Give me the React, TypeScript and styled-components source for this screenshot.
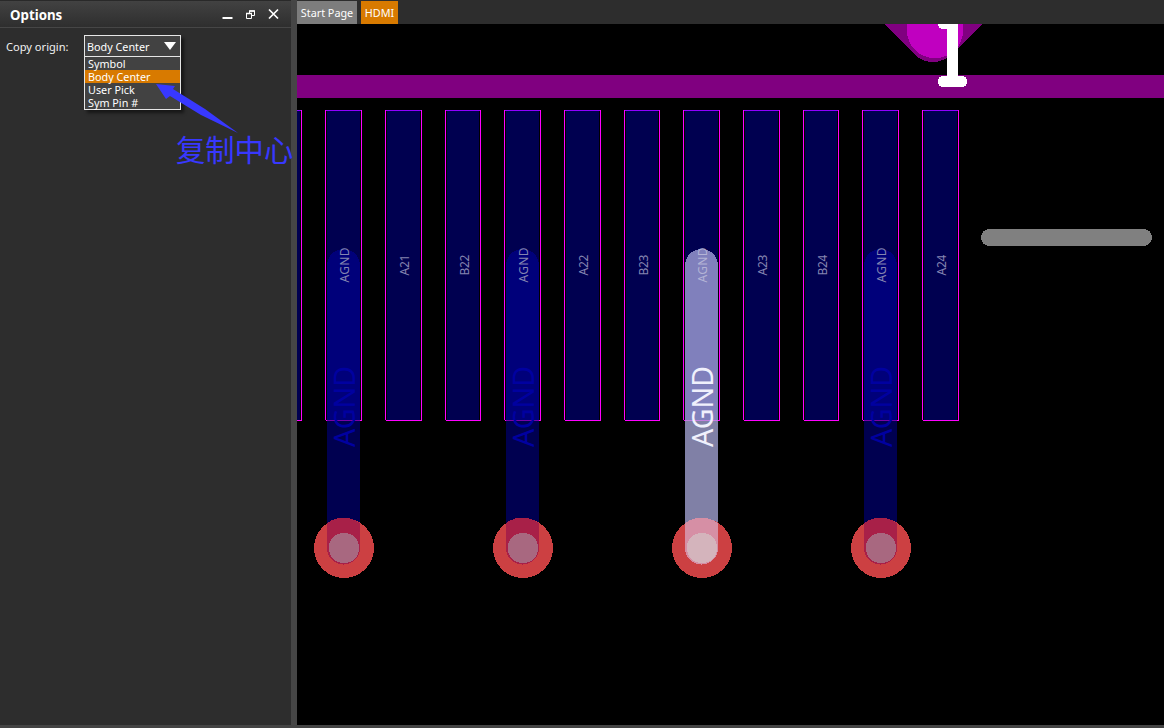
import React from 'react';
import styled, { createGlobalStyle } from 'styled-components';

const GlobalStyle = createGlobalStyle`
  * { box-sizing: border-box; }
  html, body { margin: 0; background: #2d2d2d; overflow: hidden; }
`;

const Window = styled.div`
  display: grid;
  grid-template-columns: 291px 6px 1fr;
  grid-template-rows: 725px 3px;
  width: 1164px;
  height: 728px;
  background: #2d2d2d;
  color: #fff;
  font-family: 'Noto Sans', 'Noto Sans CJK SC', sans-serif;
  font-size: 10.8px;
  line-height: 13px;
  white-space: nowrap;
`;

const Panel = styled.aside`
  display: flex;
  flex-direction: column;
  position: relative;
  z-index: 1;
  border-top: 1px solid #292929;
`;

const PanelHeader = styled.header`
  display: flex;
  align-items: center;
  justify-content: space-between;
  height: 27px;
  padding: 0 0 0 10px;
  border-bottom: 1px solid #464646;
  background: linear-gradient(#424242, #2e2e2e);
`;

const PanelTitle = styled.h1`
  margin: 0;
  padding-top: 1px;
  font-size: 13.3px;
  line-height: 18px;
  font-weight: 700;
`;

const Field = styled.div`
  display: flex;
  align-items: flex-start;
  padding: 7px 0 0 6px;
`;

const Label = styled.label`
  width: 78px;
  padding-top: 5px;
  color: #f2f2f2;
  font-size: 11.1px;
`;

const Select = styled.div`
  width: 97px;
  border: 1px solid #e6e6e6;
  background: #424242;
  box-shadow: 3px 3px 3px rgba(0, 0, 0, 0.5);
`;

const SelectValue = styled.div`
  display: flex;
  align-items: center;
  justify-content: space-between;
  height: 21px;
  padding: 0 4px 0 2px;
  border-bottom: 1px solid #e6e6e6;
`;

const Option = styled.div<{ $active?: boolean }>`
  height: 13px;
  padding-left: 3px;
  background: ${(p) => (p.$active ? '#d87a00' : 'transparent')};
`;

const Annotation = styled.div`
  position: absolute;
  left: 176px;
  top: 129px;
  z-index: 2;
  color: #3838ff;
  font: 29.3px/36px 'Noto Sans CJK SC', sans-serif;
`;

const Arrow = styled.svg`
  position: absolute;
  left: 150px;
  top: 79px;
  z-index: 2;
`;

const Splitter = styled.div`
  background: #464646;
`;

const Workspace = styled.main`
  display: flex;
  flex-direction: column;
  min-width: 0;
`;

const TabBar = styled.nav`
  display: flex;
  gap: 4px;
  height: 24px;
  padding-top: 1px;
`;

const Tab = styled.div<{ $active?: boolean }>`
  width: ${(p) => (p.$active ? 37 : 60)}px;
  text-align: center;
  line-height: 24px;
  font-size: 10.8px;
  background: ${(p) => (p.$active ? '#d87a00' : '#7d7d7d')};
`;

const Board = styled.svg`
  display: block;
  background: #000;
`;

const StatusEdge = styled.footer`
  grid-column: 1 / -1;
  background: #444;
`;

const options = ['Symbol', 'Body Center', 'User Pick', 'Sym Pin #'];

const pads = [
  { x: 325, name: 'AGND' },
  { x: 385, name: 'A21' },
  { x: 445, name: 'B22', width: 36 },
  { x: 504, name: 'AGND' },
  { x: 564, name: 'A22' },
  { x: 624, name: 'B23', width: 36 },
  { x: 683, name: 'AGND', selected: true },
  { x: 743, name: 'A23' },
  { x: 803, name: 'B24', width: 36 },
  { x: 862, name: 'AGND' },
  { x: 922, name: 'A24' },
];

function Pad({ x, width = 37 }: { x: number; width?: number }) {
  return (
    <g shapeRendering="crispEdges">
      <rect x={x + 2} y={111} width={width - 4} height={309} fill="#000050" />
      <rect x={x + 1} y={110} width={width - 2} height={1} fill="#9000ff" />
      <g fill="#ff00ff">
        <rect x={x} y={110} width={1} height={310} />
        <rect x={x + width - 1} y={110} width={1} height={310} />
        <rect x={x + 1} y={420} width={width - 1} height={1} />
      </g>
    </g>
  );
}

function Trace({ x, selected }: { x: number; selected?: boolean }) {
  const left = x + 2;
  const cx = x + 19;
  return (
    <g shapeRendering="crispEdges">
      <path
        d={`M${left} 420V265.5a16.5 16.5 0 0 1 33 0V420Z`}
        fill={selected ? '#8080bc' : '#00007a'}
      />
      <rect x={left} y={420} width={33} height={110} fill={selected ? '#8080a6' : '#000050'} />
      <rect x={left} y={420} width={33} height={1} fill={selected ? '#c080e0' : '#7800a8'} />
      <circle cx={cx} cy={548} r={30} fill="#cc4042" />
      <path
        d={`M${left} 523Q${cx - 0.5} 512 ${left + 33} 523V548a16.5 16.5 0 0 1 -33 0Z`}
        fill={selected ? '#d68fa5' : '#a82048'}
      />
      <circle cx={cx} cy={548} r={15.2} fill={selected ? '#d4b4bc' : '#a86880'} />
    </g>
  );
}

function BoardView() {
  return (
    <Board width={867} height={701} viewBox="297 24 867 701" fontFamily="'Noto Sans', sans-serif">
      <path d="M884 24H982L950 56Q933 68 916 56Z" fill="#800080" shapeRendering="crispEdges" />
      <circle cx={935} cy={30} r={28.2} fill="#c000c0" shapeRendering="crispEdges" />
      <rect x={297} y={75} width={867} height={23} fill="#800080" />
      <g fill="#fff" shapeRendering="crispEdges">
        <rect x={947} y={24} width={11} height={58} />
        <rect x={938} y={18} width={16} height={11} rx={5} />
        <rect x={938} y={76} width={29} height={11} rx={5} />
      </g>
      <Pad x={265} />
      {pads.map((p) => (
        <Pad key={p.x} x={p.x} width={p.width} />
      ))}
      {pads
        .filter((p) => p.name === 'AGND')
        .map((p) => (
          <Trace key={p.x} x={p.x} selected={p.selected} />
        ))}
      {pads.map((p) => (
        <text
          key={p.x}
          transform={`translate(${p.x + 24} 265) rotate(-90)`}
          textAnchor="middle"
          textLength={p.name === 'AGND' ? 35 : 21}
          fontSize={12}
          fill={p.selected ? '#b4b4d6' : '#8585b0'}
        >
          {p.name}
        </text>
      ))}
      {pads
        .filter((p) => p.name === 'AGND')
        .map((p) => (
          <text
            key={p.x}
            transform={`translate(${p.x + 30} 447) rotate(-90)`}
            textLength={81}
            fontSize={28.5}
            fill={p.selected ? '#f0f0fc' : '#0000a0'}
          >
            AGND
          </text>
        ))}
      <rect x={981} y={229} width={171} height={17} rx={8.5} fill="#808080" shapeRendering="crispEdges" />
    </Board>
  );
}

export default function App() {
  return (
    <Window>
      <GlobalStyle />
      <Panel>
        <PanelHeader>
          <PanelTitle>Options</PanelTitle>
          <svg width="70" height="26" viewBox="221 1 70 26" fill="none" stroke="#fff">
            <path d="M222.5 18H232.5" strokeWidth="2" />
            <path d="M246.5 13.5h5v5h-5zM249.5 13.5v-2.5h5v4.5h-3" strokeWidth="1" />
            <path d="M246 13.5h6M249 11h6" strokeWidth="1.7" />
            <path d="M269 9.5l9 9m0-9l-9 9" strokeWidth="1.7" />
          </svg>
        </PanelHeader>
        <Field>
          <Label>Copy origin:</Label>
          <Select>
            <SelectValue>
              Body Center
              <svg width="12" height="8" viewBox="0 0 12 8">
                <path d="M0 0H12L6 8Z" fill="#fff" />
              </svg>
            </SelectValue>
            {options.map((o) => (
              <Option key={o} $active={o === 'Body Center'}>
                {o}
              </Option>
            ))}
          </Select>
        </Field>
        <Arrow width="90" height="56" viewBox="150 80 90 56">
          <path d="M156 84L175 86L173 89L205 109L238 133L201 115L170 96L166 99Z" fill="#3838ff" />
        </Arrow>
        <Annotation>复制中心</Annotation>
      </Panel>
      <Splitter />
      <Workspace>
        <TabBar>
          <Tab>Start Page</Tab>
          <Tab $active>HDMI</Tab>
        </TabBar>
        <BoardView />
      </Workspace>
      <StatusEdge />
    </Window>
  );
}
